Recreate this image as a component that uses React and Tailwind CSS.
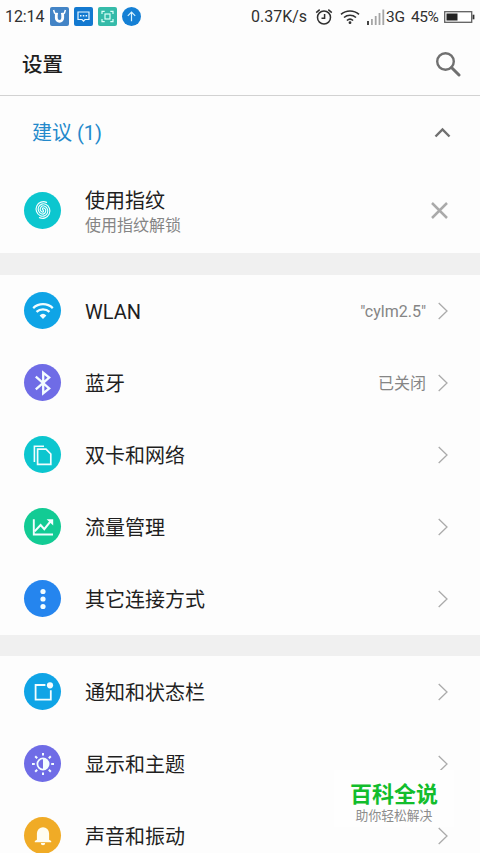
import clsx from "clsx"

const connections = [
  { label: "WLAN", value: '"cylm2.5"', color: "bg-[#0fa4e6]", icon: <WifiIcon /> },
  { label: "蓝牙", value: "已关闭", color: "bg-[#6f6ce6]", icon: <BluetoothIcon /> },
  { label: "双卡和网络", color: "bg-[#0cc6cf]", icon: <SimIcon /> },
  { label: "流量管理", color: "bg-[#12cb94]", icon: <TrafficIcon /> },
  { label: "其它连接方式", color: "bg-[#2585ee]", icon: <MoreIcon /> },
]

const personal = [
  { label: "通知和状态栏", color: "bg-[#0fa4e6]", icon: <NoticeIcon /> },
  { label: "显示和主题", color: "bg-[#6f6ce6]", icon: <DisplayIcon /> },
  { label: "声音和振动", color: "bg-[#f0ab26]", icon: <BellIcon /> },
]

// every round icon is drawn on the same 38 x 38 grid
function Glyph({ children }) {
  return (
    <svg
      viewBox="0 0 38 38"
      className="size-[38px] shrink-0"
      fill="none"
      stroke="#f2fdff"
      strokeWidth="1.8"
    >
      {children}
    </svg>
  )
}

function FingerprintIcon() {
  // two spiral arms, the second is the first one turned by half a circle
  return (
    <Glyph>
      <g strokeWidth="1.15" strokeLinecap="round" transform="rotate(-65 19 19)">
        <path d="M19 19a1.05 1.05 0 0 1-2.1 0a3.15 3.15 0 0 1 6.3 0a5.25 5.25 0 0 1-10.5 0a7.35 7.35 0 0 1 14.7 0" />
        <path d="M19 19a1.05 1.05 0 0 1 2.1 0a3.15 3.15 0 0 1-6.3 0a5.25 5.25 0 0 1 10.5 0a7.35 7.35 0 0 1-14.7 0" />
      </g>
    </Glyph>
  )
}

function WifiIcon() {
  return (
    <Glyph>
      <path d="M9.2 16.1a14.3 14.3 0 0 1 19.6 0" strokeWidth="2.3" />
      <path d="M12.5 19.9a9.4 9.4 0 0 1 13 0" strokeWidth="2.3" />
      <path d="M15.6 23.4a5 5 0 0 1 6.8 0L19 27z" fill="#f2fdff" stroke="none" />
    </Glyph>
  )
}

function BluetoothIcon() {
  return (
    <Glyph>
      <path d="M11.8 12.6l13.4 11.8-6 5V8.6l6 5-13.4 11.8" strokeWidth="2.3" />
    </Glyph>
  )
}

function SimIcon() {
  return (
    <Glyph>
      <path d="M10.4 26V10.3h9.6" strokeWidth="1.6" />
      <path d="M13.6 13.2h8.4l4.8 4.8v10.4H13.6z" strokeWidth="1.7" />
    </Glyph>
  )
}

function TrafficIcon() {
  return (
    <Glyph>
      <path d="M9.8 11.3v15.2h19.2" strokeWidth="1.9" />
      <path d="M10.6 23.4l6-6.4 3.7 4.2 6.4-8" strokeWidth="2.1" />
      <path d="M22.6 11.2h6.6v6.2z" fill="#f2fdff" stroke="none" />
    </Glyph>
  )
}

function MoreIcon() {
  return (
    <Glyph>
      <g fill="#f2fdff" stroke="none">
        <circle cx="19" cy="11.5" r="2.6" />
        <circle cx="19" cy="19" r="2.6" />
        <circle cx="19" cy="26.5" r="2.6" />
      </g>
    </Glyph>
  )
}

function NoticeIcon() {
  return (
    <Glyph>
      <path d="M21.4 12H11.6v14.6h15.2v-9.4" strokeWidth="1.8" />
      <circle cx="26" cy="12.3" r="3.1" fill="#f2fdff" stroke="none" />
    </Glyph>
  )
}

function DisplayIcon() {
  return (
    <Glyph>
      <circle cx="19" cy="19" r="5.6" strokeWidth="1.8" />
      <path d="M19 13.5a5.5 5.5 0 0 1 0 11z" fill="#f2fdff" stroke="none" />
      <path
        d="M19 8v2.6M19 27.4V30M8 19h2.8M27.2 19H30M11.2 11.2l2 2M24.8 24.8l2 2M11.2 26.8l2-2M24.8 13.2l2-2"
        strokeWidth="2"
      />
    </Glyph>
  )
}

function BellIcon() {
  return (
    <Glyph>
      <g fill="#fffdf0" stroke="none">
        <path d="M10.8 25.3v-1.4l2.1-1.1v-6.2a6.1 6.4 0 0 1 12.2 0v6.2l2.1 1.1v1.4z" />
        <path d="M16.8 26h4.4a2.2 2.2 0 0 1-4.4 0z" />
      </g>
    </Glyph>
  )
}

function Circle({ color, children }) {
  return (
    <div
      className={clsx(
        "mb-px ml-[24px] flex size-[37px] shrink-0 items-center justify-center rounded-full",
        color
      )}
    >
      {children}
    </div>
  )
}

function StatusBar() {
  return (
    <div className="flex h-[33px] shrink-0 items-center justify-between px-[5px] text-[#303030]">
      <div className="flex items-center">
        <span className="w-[45px] pt-px text-[16px] leading-5 tracking-[-0.1px]">12:14</span>
        <div className="flex gap-[5px]">
          <svg viewBox="0 0 19 19" className="size-[19px]">
            <rect width="19" height="19" rx="2" fill="#4384c6" />
            <path
              d="M6.3 6v5a3.2 3.4 0 0 0 6.4 0V6"
              fill="none"
              stroke="#fff"
              strokeWidth="2.8"
            />
            <path
              d="M3.6 3l1 3.2 3.4.6M15.4 3l-1 3.2-3.4.6"
              fill="none"
              stroke="#fff"
              strokeWidth="1.5"
            />
          </svg>
          <svg viewBox="0 0 19 19" className="size-[19px]">
            <rect width="19" height="19" rx="2" fill="#1379d0" />
            <path
              d="M4 5h11v7.5h-4l-1.5 1.7L8 12.5H4z"
              fill="none"
              stroke="#e8f7ff"
              strokeWidth="1.2"
            />
            <path d="M6 8.8h1.5M8.8 8.8h1.5M11.6 8.8h1.5" stroke="#e8f7ff" strokeWidth="1.5" />
          </svg>
          <svg viewBox="0 0 19 19" className="size-[19px]">
            <rect width="19" height="19" rx="2" fill="#35bba9" />
            <g fill="none" stroke="#dcfff8" strokeWidth="1.2">
              <path d="M4 7V4.3h2.7M12.3 4.3H15V7M15 12v2.7h-2.7M6.7 14.7H4V12" />
              <rect x="7" y="7" width="5" height="5" />
            </g>
          </svg>
          <svg viewBox="0 0 19 19" className="size-[19px]">
            <circle cx="9.5" cy="9.5" r="9.5" fill="#1580d5" />
            <path
              d="M9.5 14.2V5.2M5.8 8.8l3.7-3.7 3.7 3.7"
              fill="none"
              stroke="#d8f3ff"
              strokeWidth="1.2"
            />
          </svg>
        </div>
      </div>

      <div className="flex items-center text-[16px] leading-5">
        <span className="w-[64px] pt-px whitespace-nowrap">0.37K/s</span>
        <svg
          viewBox="0 0 18 18"
          className="size-[18px]"
          fill="none"
          stroke="#303030"
          strokeWidth="1.5"
        >
          <circle cx="9" cy="9.5" r="6.5" />
          <path d="M9.6 6v4.3H6.5M1.2 4.6l3.5-3M16.8 4.6l-3.5-3" />
        </svg>
        <svg
          viewBox="0 0 20 16"
          className="ml-[7px] h-4 w-5"
          fill="none"
          stroke="#303030"
          strokeWidth="1.6"
        >
          <path d="M1 5.4a13.5 13.5 0 0 1 18 0M4 8.5a9 9 0 0 1 12 0M6.9 11.5a4.7 4.7 0 0 1 6.2 0" />
          <circle cx="10" cy="13.7" r="1.4" fill="#303030" stroke="none" />
        </svg>
        <svg viewBox="0 0 18 16" className="ml-[7px] h-4 w-[18px]" strokeWidth="1.8">
          <path d="M1 16v-4" stroke="#303030" />
          <path d="M4.9 16v-6M8.7 16V7M12.5 16V4M16.3 16V0.5" stroke="#a5a5a5" />
        </svg>
        <span className="ml-px w-[25px] pt-px text-[15.5px] tracking-[-0.3px]">3G</span>
        <span className="w-[33px] pt-px text-[15.5px] tracking-[-0.5px]">45%</span>
        <svg viewBox="0 0 31 12" className="h-3 w-[31px]">
          <rect x="0.7" y="0.7" width="27" height="10.6" fill="#fff" stroke="#606060" strokeWidth="1.3" />
          <rect x="2.5" y="2.5" width="11" height="7" fill="#222" />
          <path d="M29.5 3.7v4.6" stroke="#303030" strokeWidth="1.8" />
        </svg>
      </div>
    </div>
  )
}

function Row({ item }) {
  return (
    <div className="flex h-[72px] shrink-0 items-center pr-[32px]">
      <Circle color={item.color}>{item.icon}</Circle>
      <span className="ml-[24px] flex-1 pt-px text-[20px] leading-7">{item.label}</span>
      <span className="pt-px text-[16px] leading-6 text-[#858585]">{item.value}</span>
      <svg
        viewBox="0 0 10 18"
        className="ml-[12px] h-[18px] w-[10px]"
        fill="none"
        stroke="#ababab"
        strokeWidth="1.3"
      >
        <path d="M0.7 1l8.3 8-8.3 8" />
      </svg>
    </div>
  )
}

export default function App() {
  return (
    <div className="relative flex h-[853px] w-[480px] flex-col overflow-hidden bg-[#fdfdfd] font-[Roboto,'Noto_Sans_CJK_SC',sans-serif] text-[#1f1f1f]">
      <StatusBar />

      <header className="flex h-[63px] shrink-0 items-center justify-between border-b border-[#d2d2d2] pr-[19px] pl-[22px]">
        <h1 className="pt-[2px] text-[20.5px] leading-7 font-medium">设置</h1>
        <svg
          viewBox="0 0 26 26"
          className="size-[26px]"
          fill="none"
          stroke="#707070"
          strokeWidth="2.4"
        >
          <circle cx="10.5" cy="10.5" r="8.3" />
          <path d="M16.5 16.5l7.5 7.5" strokeWidth="3" strokeLinecap="round" />
        </svg>
      </header>

      <section className="h-[157px] shrink-0">
        <div className="flex h-[72px] items-center justify-between pr-[29px] pl-[32px]">
          <span className="pt-[2px] text-[20px] leading-7 text-[#2389cb]">建议 (1)</span>
          <svg
            viewBox="0 0 17 11"
            className="h-[11px] w-[17px]"
            fill="none"
            stroke="#707070"
            strokeWidth="2.4"
          >
            <path d="M1.5 9.5l7-7 7 7" />
          </svg>
        </div>
        <div className="flex h-[85px] items-center pr-[32px]">
          <Circle color="bg-[#0cc6cf]">
            <FingerprintIcon />
          </Circle>
          <div className="ml-[24px] flex-1 pt-[5px]">
            <p className="text-[20px] leading-[25px]">使用指纹</p>
            <p className="text-[16px] leading-6 text-[#858585]">使用指纹解锁</p>
          </div>
          <svg
            viewBox="0 0 17 17"
            className="size-[17px]"
            fill="none"
            stroke="#aaaaaa"
            strokeWidth="2.5"
          >
            <path d="M1 1l15 15M16 1L1 16" />
          </svg>
        </div>
      </section>

      <div className="h-[22px] shrink-0 bg-[#f0f0f0]"></div>

      <section className="shrink-0">
        {connections.map((item) => (
          <Row key={item.label} item={item} />
        ))}
      </section>

      <div className="h-[21px] shrink-0 bg-[#f0f0f0]"></div>

      <section className="shrink-0">
        {personal.map((item) => (
          <Row key={item.label} item={item} />
        ))}
      </section>

      <div className="absolute top-[770px] left-[334px] flex h-[57px] w-[120px] flex-col items-center bg-[#fefefe] pt-[11px]">
        <span className="text-[22px] leading-[27px] font-bold text-[#12bd2c]">百科全说</span>
        <span className="text-[12.8px] leading-[15px] text-[#8c8c8c]">助你轻松解决</span>
      </div>
    </div>
  )
}
